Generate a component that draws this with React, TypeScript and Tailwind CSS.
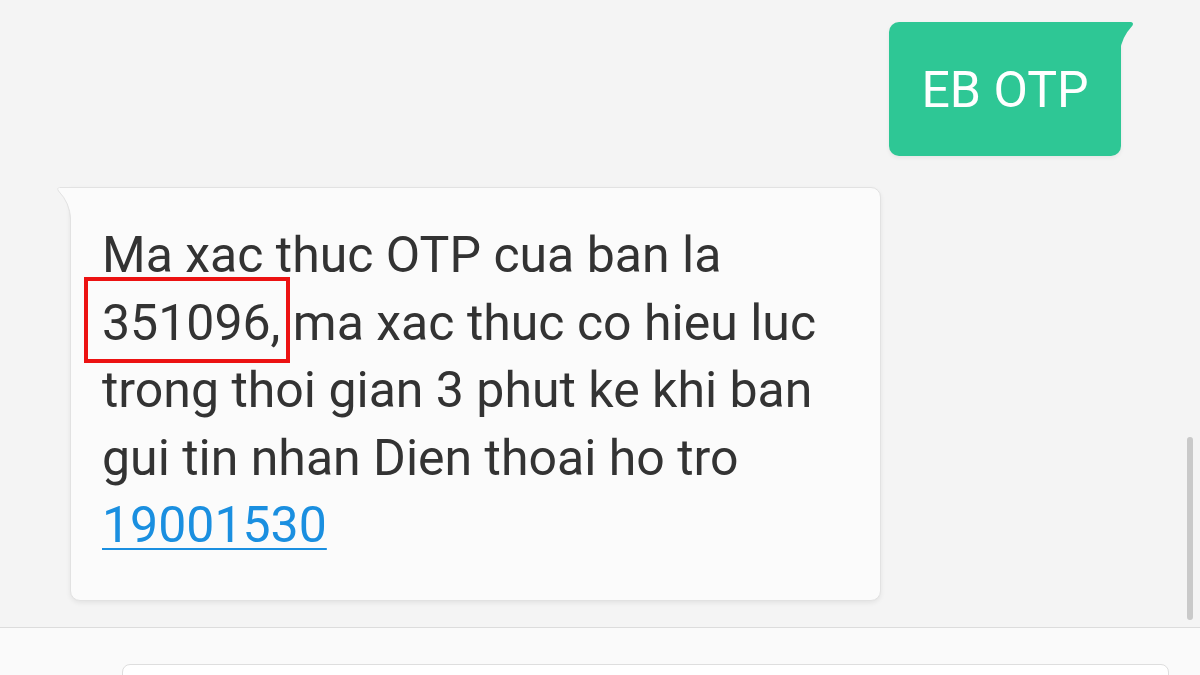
import React from "react";

export default function App() {
  const font = { fontFamily: "Roboto, 'Noto Sans', sans-serif" };
  return (
    <div className="w-[1200px] h-[675px] flex flex-col bg-[#f4f4f4] overflow-hidden" style={font}>
      <div className="relative flex-1 flex flex-col pt-[22px]">
        <div className="flex justify-end pr-[79px]">
          <div className="relative bg-[#2ec795] rounded-[10px] rounded-tr-none w-[232px] h-[134px] flex items-center justify-center shadow-[0_2px_4px_rgba(0,0,0,0.06)]">
            <span className="text-white text-[50px] leading-none pt-[2px]">EB OTP</span>
            <svg className="absolute top-0 -right-[13px]" width="14" height="30" viewBox="0 0 14 30">
              <path d="M0 0 H11 Q14 0.5 12.5 3.5 Q1 16 0 30 Z" fill="#2ec795" />
            </svg>
          </div>
        </div>
        <div className="mt-[31px] ml-[70px] w-[811px] relative">
          <div className="relative bg-[#fbfbfb] border border-[#e2e2e2] rounded-[10px] rounded-tl-none pl-[31px] pr-[20px] pt-[34px] pb-[40px] shadow-[0_2px_5px_rgba(0,0,0,0.07)]">
            <div className="text-[50px] leading-[67.5px] text-[#333333] whitespace-nowrap">
              <div>Ma xac thuc OTP cua ban la</div>
              <div>
                <span className="relative">
                  351096,
                  <span className="absolute -left-[18px] -right-[10px] -top-[17px] -bottom-[11px] border-[4px] border-[#ec1212]"></span>
                </span>{" "}
                ma xac thuc co hieu luc
              </div>
              <div>trong thoi gian 3 phut ke khi ban</div>
              <div>gui tin nhan Dien thoai ho tro</div>
              <div>
                <span className="text-[#1a8fe0] underline decoration-[2px] underline-offset-[6px]">19001530</span>
              </div>
            </div>
          </div>
          <svg className="absolute top-0 -left-[13px]" width="15" height="32" viewBox="0 0 15 32">
            <path d="M14 0 H2.5 Q-0.5 0.5 1.5 3.5 Q13 16 14 32 Z" fill="#fbfbfb" />
            <path d="M15 0.5 H2.5 Q-0.5 1 1.5 4 Q13 16 13.5 32" fill="none" stroke="#e2e2e2" strokeWidth="1" />
          </svg>
        </div>
        <div className="absolute right-[7px] top-[437px] w-[6px] h-[183px] rounded-full bg-[#c9c9c9]"></div>
      </div>
      <div className="h-[48px] border-t border-[#dcdcdc] bg-[#fafafa] pt-[36px] pl-[122px] pr-[31px]">
        <div className="h-[40px] bg-white border border-[#dedede] rounded-[8px]"></div>
      </div>
    </div>
  );
}
